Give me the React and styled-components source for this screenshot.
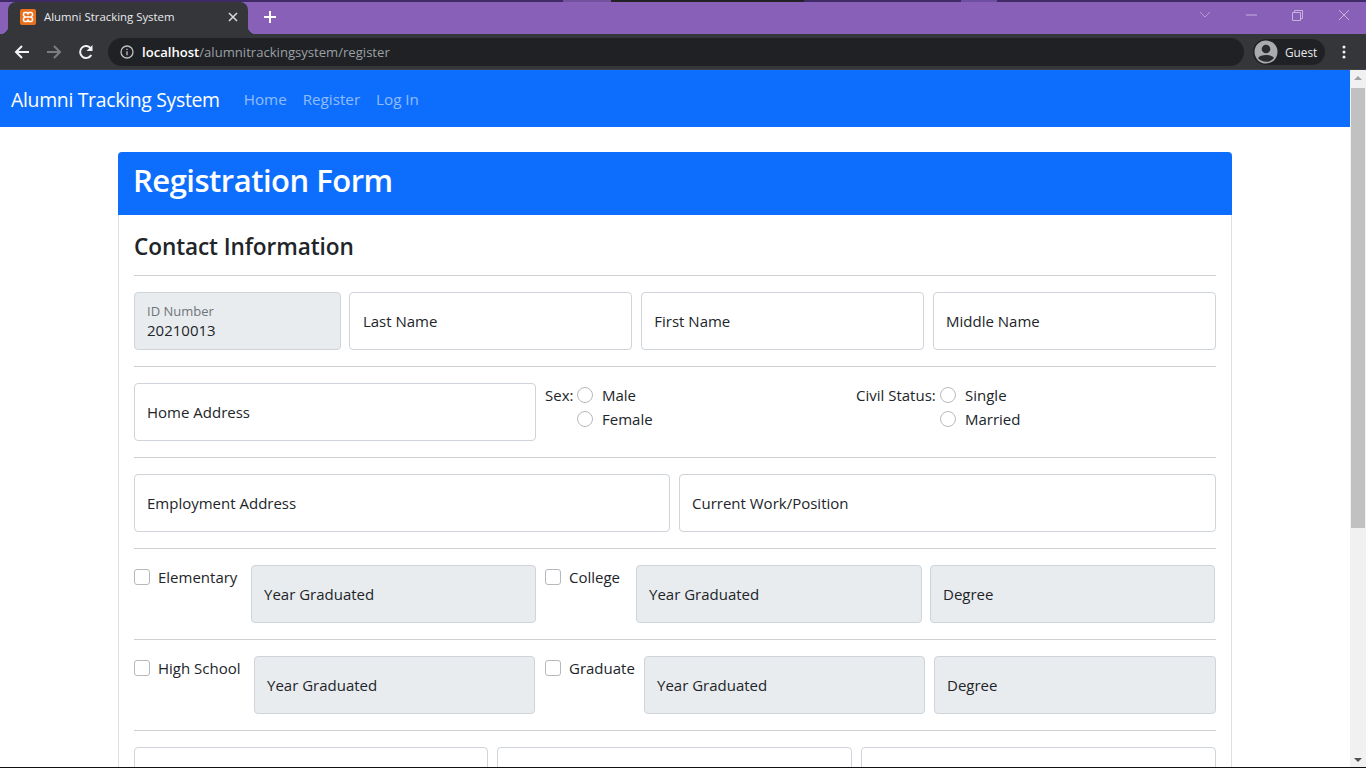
import React from "react";
import styled, { createGlobalStyle } from "styled-components";

const Global = createGlobalStyle`
  html, body { margin: 0; padding: 0; height: 768px; overflow: hidden; background: #fff; }
  * { box-sizing: border-box; }
  body { font-family: "Open Sans", "Noto Sans", sans-serif; color: #212529; }
`;
const Screen = styled.div`width:1366px;height:768px;display:flex;flex-direction:column;overflow:hidden;border-bottom:1px solid #111;`;
const TabStrip = styled.div`height:34px;flex:none;background:#8860b8;border-top:2px solid #3d2a66;
  border-image:linear-gradient(to right,#3d2a66 563px,#7350a0 563px,#7350a0 611px,#222226 611px,#222226 804px,#3d2a66 804px,#3d2a66 961px,#6d4ea0 961px,#6d4ea0 997px,#3d2a66 997px) 1;
  display:flex;align-items:flex-end;padding-left:8px;`;
const Tab = styled.div`position:relative;width:240px;height:32px;background:#35363a;border-radius:8px 8px 0 0;display:flex;align-items:center;padding:0 10px 2px 12px;color:#e8eaed;font:11.400px "Open Sans",sans-serif;
  &::before,&::after{content:"";position:absolute;bottom:0;width:8px;height:8px;}
  &::before{left:-8px;background:radial-gradient(circle at 0 0,transparent 8px,#35363a 8.500px);}
  &::after{right:-8px;background:radial-gradient(circle at 100% 0,transparent 8px,#35363a 8.500px);}`;
const Favicon = styled.svg`width:16px;height:16px;margin-right:8px;flex:none;`;
const TabTitle = styled.span`flex:1;white-space:nowrap;margin-top:-1px;`;
const NewTab = styled.svg`width:14px;height:14px;margin:0 0 10px 15px;flex:none;`;
const WinControls = styled.div`margin-left:auto;display:flex;align-self:flex-start;align-items:center;height:26px;padding-right:16px;gap:35px;`;
const Toolbar = styled.div`height:36px;flex:none;background:#35363a;border-bottom:1px solid #3f4246;display:flex;align-items:center;padding:0 14px;`;
const NavIcon = styled.svg`width:16px;height:16px;flex:none;margin-right:${p=>p.$mr}px;`;
const UrlBar = styled.div`width:1136px;height:28px;margin-left:14px;background:#202124;border-radius:14px;display:flex;align-items:center;padding-left:12px;font:13.100px "Open Sans",sans-serif;color:#9aa0a6;`;
const Host = styled.span`color:#fff;font-weight:600;`;
const UrlText = styled.span`margin-left:8px;padding-top:1px;`;
const Guest = styled.div`width:72px;height:26px;margin-left:9px;border-radius:13px;background:#202124;display:flex;align-items:center;padding-left:1px;color:#e8eaed;font:11.800px "Open Sans",sans-serif;gap:7px;`;
const Dots = styled.svg`width:4px;height:14px;margin-left:17px;flex:none;`;
const PageWrap = styled.div`flex:1;display:flex;min-height:0;`;
const Page = styled.div`flex:1;min-width:0;overflow:hidden;`;
const Scrollbar = styled.div`width:16px;flex:none;background:#f1f1f1;display:flex;flex-direction:column;align-items:center;position:relative;padding-top:18px;`;
const Thumb = styled.div`width:14px;height:440px;background:#c1c1c1;`;
const Arrow = styled.div`position:absolute;left:4px;width:0;height:0;border-left:4px solid transparent;border-right:4px solid transparent;
  ${p=>p.$down?"bottom:5px;border-top:4px solid #505050;":"top:6px;border-bottom:4px solid #a3a3a3;"}`;
const Navbar = styled.nav`height:57px;background:#0d6efd;display:flex;align-items:center;padding:1px 0 0 11px;`;
const Brand = styled.span`color:#fff;font-size:19.400px;letter-spacing:-.3px;margin-right:24px;white-space:nowrap;`;
const NavLink = styled.span`color:rgba(255,255,255,.55);font-size:15.200px;margin-right:16px;white-space:nowrap;`;
const Container = styled.div`width:1114px;margin:25px 0 0 118px;`;
const Card = styled.div`border:1px solid rgba(0,0,0,.125);border-radius:4px;`;
const CardHead = styled.div`height:63px;background:#0d6efd;margin:-1px -1px 0;padding:0 15px 7px;border-radius:4px 4px 0 0;display:flex;align-items:center;`;
const Title = styled.h1`margin:0;color:#fff;font-size:31px;font-weight:600;letter-spacing:-.5px;`;
const CardBody = styled.div`padding:16px 15px 16px 15px;`;
const Section = styled.h2`margin:0;height:32px;line-height:32px;font-size:22.600px;font-weight:600;letter-spacing:-.1px;`;
const Rule = styled.hr`border:0;border-top:1px solid #cfd0d2;margin:${p=>p.$first?"12px":"16px"} 0 16px;`;
const FormRow = styled.div`display:grid;grid-template-columns:${p=>p.$cols};column-gap:${p=>p.$gap||"9px"};`;
const Field = styled.div`height:58px;border:1px solid #ced4da;border-radius:4px;background:${p=>p.$off?"#e9ecef":"#fff"};
  display:flex;flex-direction:column;justify-content:center;padding:0 ${p=>p.$pad||12}px;font-size:15px;color:#212529;min-width:0;white-space:nowrap;`;
const FloatLabel = styled.span`font-size:13px;color:#6f7479;line-height:18px;`;
const FloatValue = styled.span`font-size:15px;line-height:21px;`;
const Group = styled.div`display:flex;min-width:0;gap:${p=>p.$gap||0}px;`;
const CheckLabel = styled.label`flex:none;width:${p=>p.$w}px;display:flex;gap:8px;font-size:15px;line-height:24px;height:24px;white-space:nowrap;`;
const CheckBox = styled.span`width:16px;height:16px;border:1px solid #b5b9bd;border-radius:3px;margin-top:4px;flex:none;background:#fff;`;
const Grow = styled.div`flex:${p=>p.$basis?`0 0 ${p.$basis}px`:1};min-width:0;`;
const RadioGroup = styled.div`display:flex;font-size:15px;line-height:24px;white-space:nowrap;`;
const RadioTitle = styled.span`flex:none;width:${p=>p.$w}px;`;
const RadioOpts = styled.div`display:flex;flex-direction:column;`;
const RadioOpt = styled.label`display:flex;gap:9px;height:24px;`;
const Radio = styled.span`width:16px;height:16px;border:1px solid #b5b9bd;border-radius:50%;margin-top:4px;flex:none;`;

function Check({ w, label }) {
  return <CheckLabel $w={w}><CheckBox />{label}</CheckLabel>;
}
function Radios({ title, w, opts }) {
  return (
    <RadioGroup>
      <RadioTitle $w={w}>{title}</RadioTitle>
      <RadioOpts>{opts.map(o => <RadioOpt key={o}><Radio />{o}</RadioOpt>)}</RadioOpts>
    </RadioGroup>
  );
}

export default function App() {
  return (
    <Screen>
      <Global />
      <TabStrip>
        <Tab>
          <Favicon viewBox="0 0 16 16">
            <rect width="16" height="16" rx="2" fill="#e8701f" />
            <path d="M5 3.500h2l1 1.500 1-1.500h2A1.500 1.500 0 0 1 12.500 5v1.500L11 8l1.500 1.500V11A1.500 1.500 0 0 1 11 12.500H9L8 11l-1 1.500H5A1.500 1.500 0 0 1 3.500 11V9.500L5 8 3.500 6.500V5A1.500 1.500 0 0 1 5 3.500zM5.500 8h5" fill="none" stroke="#fff" strokeWidth="1.500" />
          </Favicon>
          <TabTitle>Alumni Stracking System</TabTitle>
          <svg width="10" height="10" viewBox="0 0 10 10"><path d="M1 1l8 8M9 1l-8 8" stroke="#d5d7da" strokeWidth="1.600" /></svg>
        </Tab>
        <NewTab viewBox="0 0 14 14"><path d="M7 1v12M1 7h12" stroke="#fff" strokeWidth="2" /></NewTab>
        <WinControls>
          <svg width="12" height="8" viewBox="0 0 12 8"><path d="M1 1l5 5 5-5" fill="none" stroke="#b69ad6" /></svg>
          <svg width="11" height="2" viewBox="0 0 11 2"><path d="M0 1h11" stroke="#c6b2de" /></svg>
          <svg width="11" height="11" viewBox="0 0 11 11"><path d="M.5 2.500h8v8h-8zM2.500 2.500v-2h8v8h-2" fill="none" stroke="#c6b2de" /></svg>
          <svg width="12" height="12" viewBox="0 0 12 12"><path d="M1 1l10 10M11 1L1 11" stroke="#c6b2de" /></svg>
        </WinControls>
      </TabStrip>
      <Toolbar>
        <NavIcon $mr={16} viewBox="0 0 16 16"><path d="M15 8H2M8 2L2 8l6 6" fill="none" stroke="#f1f3f4" strokeWidth="2" /></NavIcon>
        <NavIcon $mr={16} viewBox="0 0 16 16"><path d="M1 8h13M8 2l6 6-6 6" fill="none" stroke="#7b7d80" strokeWidth="2" /></NavIcon>
        <NavIcon $mr={0} viewBox="0 0 16 16"><path d="M13.300 11A6 6 0 1 1 13 4.500" fill="none" stroke="#f1f3f4" strokeWidth="2" /><path d="M14.500 1v6h-6z" fill="#f1f3f4" /></NavIcon>
        <UrlBar>
          <svg width="14" height="14" viewBox="0 0 14 14"><circle cx="7" cy="7" r="6" fill="none" stroke="#bdc1c6" strokeWidth="1.300" /><path d="M7 6.200v4M7 3.800v1.300" stroke="#bdc1c6" strokeWidth="1.300" /></svg>
          <UrlText><Host>localhost</Host>/alumnitrackingsystem/register</UrlText>
        </UrlBar>
        <Guest>
          <svg width="24" height="24" viewBox="0 0 24 24"><circle cx="12" cy="12" r="11.500" fill="#a9abae" /><circle cx="12" cy="9" r="4.300" fill="#2a2b2e" /><path d="M4 18c2-4 14-4 16 0-4 5-12 5-16 0z" fill="#2a2b2e" /></svg>
          Guest
        </Guest>
        <Dots viewBox="0 0 4 14"><circle cx="2" cy="2" r="1.500" fill="#f1f3f4" /><circle cx="2" cy="7" r="1.500" fill="#f1f3f4" /><circle cx="2" cy="12" r="1.500" fill="#f1f3f4" /></Dots>
      </Toolbar>
      <PageWrap>
        <Page>
          <Navbar>
            <Brand>Alumni Tracking System</Brand>
            <NavLink>Home</NavLink>
            <NavLink>Register</NavLink>
            <NavLink>Log In</NavLink>
          </Navbar>
          <Container>
            <Card>
              <CardHead><Title>Registration Form</Title></CardHead>
              <CardBody>
                <Section>Contact Information</Section>
                <Rule $first />
                <FormRow $cols="207px 283px 283.400px 1fr" $gap="8.400px">
                  <Field $off><FloatLabel>ID Number</FloatLabel><FloatValue>20210013</FloatValue></Field>
                  <Field $pad={12.5}>Last Name</Field>
                  <Field $pad={12.5}>First Name</Field>
                  <Field $pad={12.5}>Middle Name</Field>
                </FormRow>
                <Rule />
                <FormRow $cols="402px 302px 1fr">
                  <Field>Home Address</Field>
                  <Radios title="Sex:" w={32} opts={["Male", "Female"]} />
                  <Radios title="Civil Status:" w={84} opts={["Single", "Married"]} />
                </FormRow>
                <Rule />
                <FormRow $cols="536px 1fr">
                  <Field>Employment Address</Field>
                  <Field>Current Work/Position</Field>
                </FormRow>
                <Rule />
                <FormRow $cols="402px 670px">
                  <Group>
                    <Check w={117} label="Elementary" />
                    <Grow><Field $off>Year Graduated</Field></Grow>
                  </Group>
                  <Group $gap={8}>
                    <Check w={83} label="College" />
                    <Grow><Field $off>Year Graduated</Field></Grow>
                    <Grow $basis={285}><Field $off>Degree</Field></Grow>
                  </Group>
                </FormRow>
                <Rule />
                <FormRow $cols="401px 1fr" $gap="10px">
                  <Group>
                    <Check w={120} label="High School" />
                    <Grow><Field $off>Year Graduated</Field></Grow>
                  </Group>
                  <Group $gap={9}>
                    <Check w={90} label="Graduate" />
                    <Grow><Field $off>Year Graduated</Field></Grow>
                    <Grow $basis={282}><Field $off>Degree</Field></Grow>
                  </Group>
                </FormRow>
                <Rule />
                <FormRow $cols="354px 355px 1fr">
                  <Field /><Field /><Field />
                </FormRow>
              </CardBody>
            </Card>
          </Container>
        </Page>
        <Scrollbar>
          <Arrow />
          <Thumb />
          <Arrow $down />
        </Scrollbar>
      </PageWrap>
    </Screen>
  );
}
